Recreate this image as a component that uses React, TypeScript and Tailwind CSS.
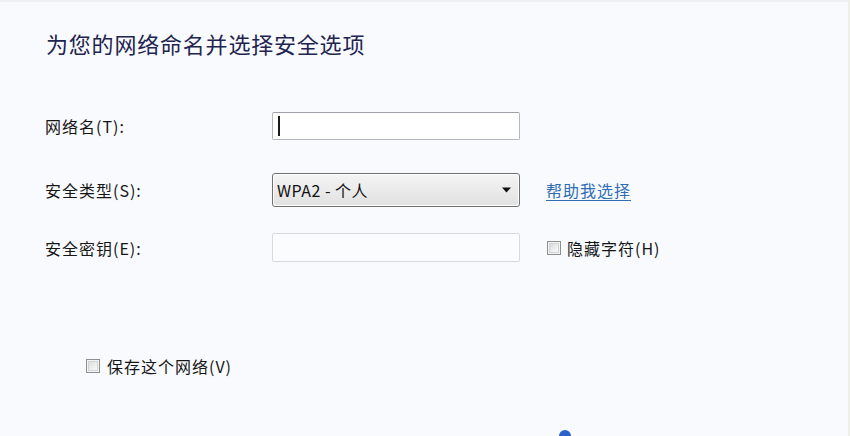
import React from "react";

const font = { fontFamily: '"Noto Sans CJK SC", "Noto Sans", "Liberation Sans", sans-serif' };

function Checkbox() {
  return (
    <div className="w-[14px] h-[14px] border border-[#8e8f8f] bg-[#f4f4f4] p-[1px] shrink-0">
      <div className="w-full h-full border border-[#d3d3d3] bg-gradient-to-br from-[#dcdcdc] to-[#fbfbfb]" />
    </div>
  );
}

export default function App() {
  return (
    <div
      className="relative w-[850px] h-[436px] overflow-hidden bg-[#f8fafd] border-r-2 border-[#eef0e8] text-[#161616]"
      style={font}
    >
      <div className="h-[2px] bg-[#eef0f2]" />
      <div className="pl-[46px] pt-[26px] text-[22px] leading-[30px] tracking-[0.8px] text-[#1f2450]">
        为您的网络命名并选择安全选项
      </div>

      <div className="mt-[54px] pl-[45px] flex flex-col">
        <div className="flex items-center h-[28px]">
          <div className="w-[227px] text-[16px] leading-[20px] tracking-[1px]">网络名(T):</div>
          <div className="w-[248px] h-[28px] rounded-[2px] border border-[#b5b8bf] border-t-[#9fa2a9] bg-white flex items-center pl-[5px]">
            <div className="w-[2px] h-[20px] bg-[#1a1a1a]" />
          </div>
        </div>

        <div className="flex items-center h-[34px] mt-[33px]">
          <div className="w-[227px] text-[16px] leading-[20px] tracking-[1px]">安全类型(S):</div>
          <div className="w-[248px] h-[34px] rounded-[3px] border border-[#707070] p-[1px] bg-white">
            <div className="w-full h-full rounded-[2px] bg-gradient-to-b from-[#f3f3f3] to-[#e2e2e2] flex items-center justify-between pl-[3px] pr-[7px]">
              <span className="text-[16px] leading-[20px] tracking-[0.5px] text-[#111]">WPA2 - 个人</span>
              <svg width="9" height="6" viewBox="0 0 9 6">
                <path d="M0 0.5 H9 L4.5 5.5 Z" fill="#111" />
              </svg>
            </div>
          </div>
          <a className="ml-[26px] text-[16px] leading-[20px] tracking-[1px] text-[#2f6db5] underline underline-offset-[3px]">
            帮助我选择
          </a>
        </div>

        <div className="flex items-center h-[29px] mt-[26px]">
          <div className="w-[227px] text-[16px] leading-[20px] tracking-[1px]">安全密钥(E):</div>
          <div className="w-[248px] h-[29px] rounded-[2px] border border-[#d7d9dd] bg-[#fbfcfe]" />
          <div className="ml-[27px] flex items-center gap-[6px]">
            <Checkbox />
            <span className="text-[16px] leading-[20px] tracking-[1px]">隐藏字符(H)</span>
          </div>
        </div>
      </div>

      <div className="mt-[94px] pl-[86px] flex items-center gap-[7px]">
        <Checkbox />
        <span className="text-[16px] leading-[20px] tracking-[1px]">保存这个网络(V)</span>
      </div>

      <div className="absolute left-[559px] top-[430px] w-[12px] h-[12px] rounded-full bg-[#2a62c9]" />
    </div>
  );
}
